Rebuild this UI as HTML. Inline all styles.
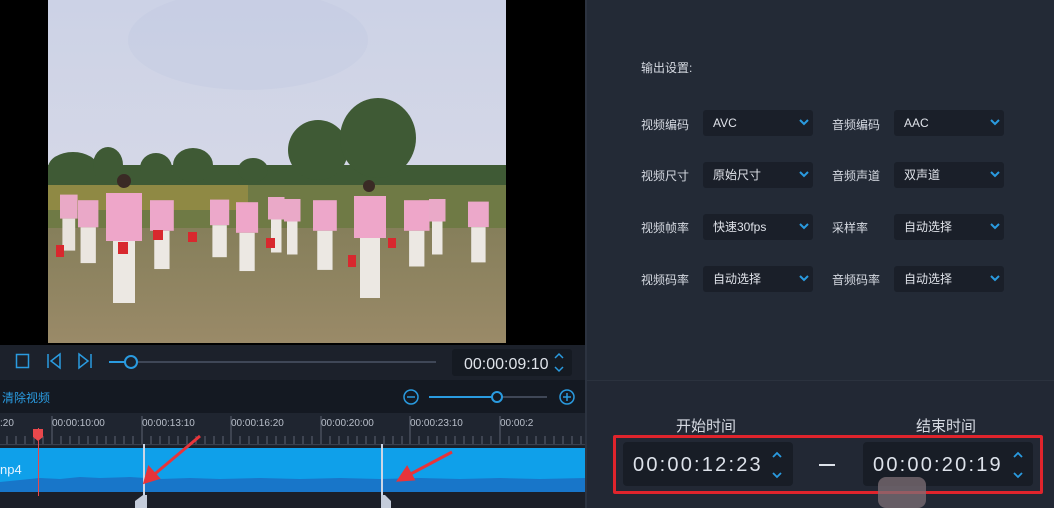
<!DOCTYPE html>
<html><head><meta charset="utf-8"><style>
*{margin:0;padding:0;box-sizing:border-box}
body{width:1054px;height:508px;overflow:hidden;background:#000;position:relative;font-family:"Liberation Sans","Noto Sans CJK SC",sans-serif}
.a{position:absolute}
.lbl{color:#d6dae2;font-size:12px}
.sel{position:absolute;width:110px;height:26px;background:#1a1f29;border-radius:3px;color:#e0e3ea;font-size:12px;line-height:26px;padding-left:10px}
.sel svg{position:absolute;right:4px;top:9px}
</style></head><body>
<svg class="a" style="left:48px;top:0" width="458" height="343" viewBox="0 0 458 343">
<defs><linearGradient id="sky" x1="0" y1="0" x2="0" y2="1"><stop offset="0" stop-color="#ccd2e6"/><stop offset="1" stop-color="#dddde8"/></linearGradient>
<linearGradient id="fld" x1="0" y1="0" x2="0" y2="1"><stop offset="0" stop-color="#7d7a55"/><stop offset="1" stop-color="#9a8a68"/></linearGradient></defs>
<rect width="458" height="343" fill="url(#sky)"/>
<ellipse cx="200" cy="40" rx="120" ry="50" fill="#bfc9df" opacity=".35"/>
<rect y="180" width="458" height="163" fill="url(#fld)"/>
<rect y="178" width="458" height="50" fill="#6f7a45"/>
<rect y="180" width="200" height="30" fill="#9c9045" opacity=".7"/>
<g fill="#3f5a35">
<rect x="0" y="165" width="458" height="20"/>
<ellipse cx="25" cy="168" rx="25" ry="16"/><ellipse cx="60" cy="165" rx="15" ry="18"/>
<ellipse cx="108" cy="168" rx="16" ry="15"/><ellipse cx="145" cy="165" rx="20" ry="17"/>
<ellipse cx="205" cy="170" rx="15" ry="12"/>
<ellipse cx="270" cy="150" rx="30" ry="30"/><ellipse cx="330" cy="138" rx="38" ry="40"/>
</g>
<g>
<g transform="translate(12,185) scale(.8)"><rect x="0" y="12" width="22" height="30" fill="#e9a9c6"/><rect x="3" y="42" width="16" height="40" fill="#e8e2dc"/></g>
<g transform="translate(30,190) scale(.85)"><rect x="0" y="12" width="24" height="32" fill="#eaa8c8"/><rect x="3" y="44" width="18" height="42" fill="#ebe6e0"/></g>
<g transform="translate(58,173)"><circle cx="18" cy="8" r="7" fill="#3a2a25"/><rect x="0" y="20" width="36" height="48" fill="#eea6c9"/><rect x="7" y="68" width="22" height="62" fill="#ece8e3"/></g>
<g transform="translate(102,190) scale(.85)"><rect x="0" y="12" width="28" height="36" fill="#eda7ca"/><rect x="5" y="48" width="18" height="45" fill="#ece8e3"/></g>
<g transform="translate(162,190) scale(.8)"><rect x="0" y="12" width="24" height="32" fill="#eca8ca"/><rect x="3" y="44" width="18" height="40" fill="#ece8e3"/></g>
<g transform="translate(188,192) scale(.85)"><rect x="0" y="12" width="26" height="36" fill="#eea6c9"/><rect x="4" y="48" width="18" height="45" fill="#ece8e3"/></g>
<g transform="translate(220,188) scale(.75)"><rect x="0" y="12" width="22" height="30" fill="#eaa9c8"/><rect x="4" y="42" width="14" height="44" fill="#ece8e3"/></g>
<g transform="translate(236,190) scale(.75)"><rect x="0" y="12" width="22" height="30" fill="#eaa9c8"/><rect x="4" y="42" width="14" height="44" fill="#ece8e3"/></g>
<g transform="translate(265,190) scale(.85)"><rect x="0" y="12" width="28" height="36" fill="#eda7ca"/><rect x="5" y="48" width="18" height="46" fill="#ece8e3"/></g>
<g transform="translate(306,180)"><circle cx="15" cy="6" r="6" fill="#3a2a25"/><rect x="0" y="16" width="32" height="42" fill="#eea6c9"/><rect x="6" y="58" width="20" height="60" fill="#ece8e3"/></g>
<g transform="translate(356,190) scale(.85)"><rect x="0" y="12" width="30" height="36" fill="#eea6c9"/><rect x="6" y="48" width="18" height="42" fill="#ece8e3"/></g>
<g transform="translate(381,190) scale(.75)"><rect x="0" y="12" width="22" height="30" fill="#eaa9c8"/><rect x="4" y="42" width="14" height="44" fill="#ece8e3"/></g>
<g transform="translate(420,192) scale(.8)"><rect x="0" y="12" width="26" height="32" fill="#eca8ca"/><rect x="4" y="44" width="18" height="44" fill="#ece8e3"/></g>
</g>
<g fill="#d8282e"><rect x="70" y="242" width="10" height="12"/><rect x="105" y="230" width="10" height="10"/><rect x="140" y="232" width="9" height="10"/><rect x="218" y="238" width="9" height="10"/><rect x="300" y="255" width="8" height="12"/><rect x="340" y="238" width="8" height="10"/><rect x="8" y="245" width="8" height="12"/></g>
</svg>
<div class="a" style="left:0;top:345px;width:585px;height:35px;background:#1c212b"></div>
<svg class="a" style="left:0;top:345px" width="585" height="35">
<rect x="16.5" y="9.5" width="12" height="13" fill="none" stroke="#2a9be0" stroke-width="1.5"/>
<path d="M48 9v14M60 9l-9 7 9 7z" fill="none" stroke="#2a9be0" stroke-width="1.5"/>
<path d="M91 9v14M79 9l9 7-9 7z" fill="none" stroke="#2a9be0" stroke-width="1.5"/>
<line x1="109" y1="17" x2="436" y2="17" stroke="#3f4757" stroke-width="2"/>
<line x1="109" y1="17" x2="131" y2="17" stroke="#2a9be0" stroke-width="2"/>
<circle cx="131" cy="17" r="6" fill="#1c212b" stroke="#2a9be0" stroke-width="2"/>
<rect x="452" y="4" width="120" height="27" rx="3" fill="#151a22"/>
<text x="464" y="24" fill="#dfe3ea" font-size="16" font-family="Liberation Sans">00:00:09:10</text>
<path d="M555 13l4-4 4 4M555 22l4 4 4-4" fill="none" stroke="#2a9be0" stroke-width="1.5"/>
</svg>
<div class="a" style="left:0;top:380px;width:585px;height:33px;background:#141922"></div>
<div class="a" style="left:2px;top:389px;color:#2a9be0;font-size:12px">清除视频</div>
<svg class="a" style="left:395px;top:385px" width="190" height="25">
<circle cx="16" cy="12" r="7" fill="none" stroke="#2a9be0" stroke-width="1.5"/><line x1="12" y1="12" x2="20" y2="12" stroke="#2a9be0" stroke-width="1.5"/>
<line x1="34" y1="12" x2="152" y2="12" stroke="#3f4757" stroke-width="2"/><line x1="34" y1="12" x2="102" y2="12" stroke="#2a9be0" stroke-width="2"/>
<circle cx="102" cy="12" r="5" fill="#141922" stroke="#2a9be0" stroke-width="2"/>
<circle cx="172" cy="12" r="7" fill="none" stroke="#2a9be0" stroke-width="1.5"/><path d="M168 12h8M172 8v8" stroke="#2a9be0" stroke-width="1.5"/>
</svg>
<div class="a" style="left:0;top:413px;width:585px;height:34px;background:#1f2530"></div>
<svg class="a" style="left:0;top:413px" width="585" height="35" font-family="Liberation Sans" font-size="10" fill="#b9bfca">
<text x="0" y="13">:20</text><text x="52" y="13">00:00:10:00</text><text x="142" y="13">00:00:13:10</text><text x="231" y="13">00:00:16:20</text><text x="321" y="13">00:00:20:00</text><text x="410" y="13">00:00:23:10</text><text x="500" y="13">00:00:2</text>
<g stroke="#5c6472" stroke-width="1">
<path d="M7 23v8M16 23v8M25 23v8M34 23v8M43 23v8M61 23v8M70 23v8M79 23v8M88 23v8M97 23v8M106 23v8M115 23v8M124 23v8M133 23v8M151 23v8M160 23v8M169 23v8M178 23v8M187 23v8M196 23v8M205 23v8M214 23v8M223 23v8M240 23v8M249 23v8M258 23v8M267 23v8M276 23v8M285 23v8M294 23v8M303 23v8M312 23v8M330 23v8M339 23v8M348 23v8M357 23v8M366 23v8M375 23v8M384 23v8M393 23v8M402 23v8M419 23v8M428 23v8M437 23v8M446 23v8M455 23v8M464 23v8M473 23v8M482 23v8M491 23v8M509 23v8M518 23v8M527 23v8M536 23v8M545 23v8M554 23v8M563 23v8M572 23v8M581 23v8"/>
<path d="M52 3v28M142 3v28M231 3v28M321 3v28M410 3v28M500 3v28"/>
<line x1="0" y1="31.5" x2="585" y2="31.5" stroke="#3a414e"/>
</g>
<path d="M33 16h10v8l-5 4-5-4z" fill="#e8484c"/>
</svg>
<div class="a" style="left:0;top:446px;width:585px;height:62px;background:#1b1f28"></div>
<div class="a" style="left:0;top:448px;width:585px;height:44px;background:#0fa0ea"></div>
<svg class="a" style="left:0;top:474px" width="585" height="18"><path d="M0 18V8L20 6L40 4L60 5 80 3 100 4 130 3 160 5 190 4 220 5 260 4 300 5 340 4 380 5 420 4 460 5 500 4 540 5 585 4V18z" fill="#1876c9"/></svg>
<div class="a" style="left:0;top:462px;color:#e6f4ff;font-size:13px">np4</div>
<div class="a" style="left:38px;top:428px;width:1px;height:68px;background:#e8484c"></div>
<div class="a" style="left:143px;top:444px;width:2px;height:64px;background:#cbd6e6"></div>
<div class="a" style="left:381px;top:444px;width:2px;height:64px;background:#cbd6e6"></div>
<svg class="a" style="left:135px;top:495px" width="12" height="13"><path d="M0 13V6L8 0h4v13z" fill="#c4ccda"/></svg>
<svg class="a" style="left:381px;top:495px" width="12" height="13"><path d="M0 0h4l6 6v7H0z" fill="#c4ccda"/></svg>
<svg class="a" style="left:0;top:430px" width="585" height="60"><g stroke="#e8343a" stroke-width="3" fill="#e8343a">
<line x1="200" y1="6" x2="150" y2="48"/><path d="M145 52l4-14 9 10z"/>
<line x1="452" y1="22" x2="405" y2="47"/><path d="M399 50l8-12 6 11z"/></g></svg>
<div class="a" style="left:585px;top:0;width:2px;height:508px;background:#2c3340"></div>
<div class="a" style="left:587px;top:0;width:467px;height:380px;background:#232a36"></div>
<div class="a" style="left:587px;top:380px;width:467px;height:128px;background:#222834;border-top:1px solid #2b323e"></div>
<div class="a lbl" style="left:641px;top:59px">输出设置:</div>
<div class="a lbl" style="left:641px;top:116px">视频编码</div><div class="sel" style="left:703px;top:110px">AVC<svg width="10" height="7"><path d="M1 1l4 4 4-4" fill="none" stroke="#2a9be0" stroke-width="2"/></svg></div>
<div class="a lbl" style="left:832px;top:116px">音频编码</div><div class="sel" style="left:894px;top:110px">AAC<svg width="10" height="7"><path d="M1 1l4 4 4-4" fill="none" stroke="#2a9be0" stroke-width="2"/></svg></div>
<div class="a lbl" style="left:641px;top:167px">视频尺寸</div><div class="sel" style="left:703px;top:162px">原始尺寸<svg width="10" height="7"><path d="M1 1l4 4 4-4" fill="none" stroke="#2a9be0" stroke-width="2"/></svg></div>
<div class="a lbl" style="left:832px;top:167px">音频声道</div><div class="sel" style="left:894px;top:162px">双声道<svg width="10" height="7"><path d="M1 1l4 4 4-4" fill="none" stroke="#2a9be0" stroke-width="2"/></svg></div>
<div class="a lbl" style="left:641px;top:219px">视频帧率</div><div class="sel" style="left:703px;top:214px">快速30fps<svg width="10" height="7"><path d="M1 1l4 4 4-4" fill="none" stroke="#2a9be0" stroke-width="2"/></svg></div>
<div class="a lbl" style="left:832px;top:219px">采样率</div><div class="sel" style="left:894px;top:214px">自动选择<svg width="10" height="7"><path d="M1 1l4 4 4-4" fill="none" stroke="#2a9be0" stroke-width="2"/></svg></div>
<div class="a lbl" style="left:641px;top:271px">视频码率</div><div class="sel" style="left:703px;top:266px">自动选择<svg width="10" height="7"><path d="M1 1l4 4 4-4" fill="none" stroke="#2a9be0" stroke-width="2"/></svg></div>
<div class="a lbl" style="left:832px;top:271px">音频码率</div><div class="sel" style="left:894px;top:266px">自动选择<svg width="10" height="7"><path d="M1 1l4 4 4-4" fill="none" stroke="#2a9be0" stroke-width="2"/></svg></div>
<div class="a" style="left:676px;top:415px;color:#d6dae2;font-size:15px">开始时间</div>
<div class="a" style="left:916px;top:415px;color:#d6dae2;font-size:15px">结束时间</div>
<div class="a" style="left:613px;top:435px;width:430px;height:59px;border:3px solid #e0242c;border-radius:2px"></div>
<div class="a" style="left:623px;top:442px;width:170px;height:44px;background:#181d26;border-radius:4px"></div>
<div class="a" style="left:863px;top:442px;width:170px;height:44px;background:#181d26;border-radius:4px"></div>
<div class="a" style="left:633px;top:454px;color:#dde2ea;font-size:20px;letter-spacing:2.2px">00:00:12:23</div>
<div class="a" style="left:873px;top:454px;color:#dde2ea;font-size:20px;letter-spacing:2.2px">00:00:20:19</div>
<svg class="a" style="left:771px;top:450px" width="12" height="30"><path d="M2 7l4-4 4 4M2 23l4 4 4-4" fill="none" stroke="#2a9be0" stroke-width="1.8"/></svg>
<svg class="a" style="left:1012px;top:450px" width="12" height="30"><path d="M2 7l4-4 4 4M2 23l4 4 4-4" fill="none" stroke="#2a9be0" stroke-width="1.8"/></svg>
<div class="a" style="left:819px;top:464px;width:16px;height:2px;background:#dde2ea"></div>
<div class="a" style="left:878px;top:477px;width:48px;height:31px;background:#7d6f76;border-radius:8px;opacity:.75"></div>
</body></html>
